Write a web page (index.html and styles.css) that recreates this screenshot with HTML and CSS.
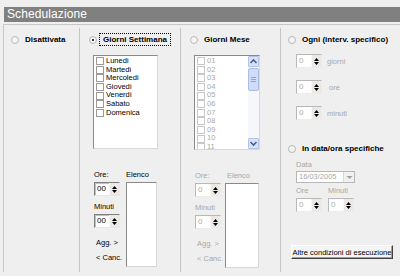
FILE: index.html
```html
<!DOCTYPE html>
<html lang="it">
<head>
  <meta charset="UTF-8" />
  <title>Schedulazione</title>
  <link rel="stylesheet" href="styles.css">
</head>
<body>
  <div class="title">Schedulazione</div>

  <div class="frame">
    <!-- Disattivata -->
    <div class="col col-off">
      <label class="opt"><span class="radio"></span><b>Disattivata</b></label>
    </div>

    <!-- Giorni settimana -->
    <div class="col col-week">
      <label class="opt"><span class="radio on"></span><b class="focus">Giorni Settimana</b></label>
      <div class="list">
        <div class="item"><span class="chk"></span>Lunedì</div>
        <div class="item"><span class="chk"></span>Martedì</div>
        <div class="item"><span class="chk"></span>Mercoledì</div>
        <div class="item"><span class="chk"></span>Giovedì</div>
        <div class="item"><span class="chk"></span>Venerdì</div>
        <div class="item"><span class="chk"></span>Sabato</div>
        <div class="item"><span class="chk"></span>Domenica</div>
      </div>
      <div class="times">
        <div class="fields">
          <div class="lbl">Ore:</div>
          <div class="spin"><span class="val">00</span><span class="arr"><svg width="9" height="11" viewBox="0 0 9 11"><path d="M2 5h5L4.5 2z M2 6h5L4.5 9z" fill="#000"/></svg></span></div>
          <div class="lbl gap">Minuti</div>
          <div class="spin"><span class="val">00</span><span class="arr"><svg width="9" height="11" viewBox="0 0 9 11"><path d="M2 5h5L4.5 2z M2 6h5L4.5 9z" fill="#000"/></svg></span></div>
          <div class="act first">Agg. &gt;</div>
          <div class="act">&lt; Canc.</div>
        </div>
        <div class="elenco">
          <div class="lbl">Elenco</div>
          <div class="box"></div>
        </div>
      </div>
    </div>

    <!-- Giorni mese -->
    <div class="col col-month">
      <label class="opt"><span class="radio"></span><b>Giorni Mese</b></label>
      <div class="list off scroll">
        <div class="items">
          <div class="item"><span class="chk"></span>01</div>
          <div class="item"><span class="chk"></span>02</div>
          <div class="item"><span class="chk"></span>03</div>
          <div class="item"><span class="chk"></span>04</div>
          <div class="item"><span class="chk"></span>05</div>
          <div class="item"><span class="chk"></span>06</div>
          <div class="item"><span class="chk"></span>07</div>
          <div class="item"><span class="chk"></span>08</div>
          <div class="item"><span class="chk"></span>09</div>
          <div class="item"><span class="chk"></span>10</div>
          <div class="item"><span class="chk"></span>11</div>
        </div>
        <div class="sbar">
          <span class="sbtn"><svg width="9" height="9" viewBox="0 0 9 9"><path d="M1.5 6L4.5 3L7.5 6" stroke="#4d6185" stroke-width="1.6" fill="none"/></svg></span>
          <span class="thumb"><i></i><i></i><i></i></span>
          <span class="track"></span>
          <span class="sbtn"><svg width="9" height="9" viewBox="0 0 9 9"><path d="M1.5 3L4.5 6L7.5 3" stroke="#4d6185" stroke-width="1.6" fill="none"/></svg></span>
        </div>
      </div>
      <div class="times off">
        <div class="fields">
          <div class="lbl">Ore:</div>
          <div class="spin"><span class="val">0</span><span class="arr"><svg width="9" height="11" viewBox="0 0 9 11"><path d="M2 5h5L4.5 2z M2 6h5L4.5 9z" fill="#000"/></svg></span></div>
          <div class="lbl gap">Minuti</div>
          <div class="spin"><span class="val">0</span><span class="arr"><svg width="9" height="11" viewBox="0 0 9 11"><path d="M2 5h5L4.5 2z M2 6h5L4.5 9z" fill="#000"/></svg></span></div>
          <div class="act first">Agg. &gt;</div>
          <div class="act">&lt; Canc.</div>
        </div>
        <div class="elenco">
          <div class="lbl">Elenco</div>
          <div class="box"></div>
        </div>
      </div>
    </div>

    <!-- Intervallo / data specifica -->
    <div class="col col-every">
      <label class="opt"><span class="radio"></span><b>Ogni (interv. specifico)</b></label>
      <div class="every off">
        <div class="row"><div class="spin"><span class="val">0</span><span class="arr"><svg width="9" height="11" viewBox="0 0 9 11"><path d="M2 5h5L4.5 2z M2 6h5L4.5 9z" fill="#000"/></svg></span></div><span class="unit">giorni</span></div>
        <div class="row"><div class="spin"><span class="val">0</span><span class="arr"><svg width="9" height="11" viewBox="0 0 9 11"><path d="M2 5h5L4.5 2z M2 6h5L4.5 9z" fill="#000"/></svg></span></div><span class="unit u-ore">ore</span></div>
        <div class="row"><div class="spin"><span class="val">0</span><span class="arr"><svg width="9" height="11" viewBox="0 0 9 11"><path d="M2 5h5L4.5 2z M2 6h5L4.5 9z" fill="#000"/></svg></span></div><span class="unit">minuti</span></div>
      </div>

      <label class="opt opt-date"><span class="radio"></span><b>In data/ora specifiche</b></label>
      <div class="date off">
        <div class="lbl">Data</div>
        <div class="combo"><span class="val">16/03/2005</span><span class="drop"><svg width="7" height="5" viewBox="0 0 7 5"><path d="M0.5 1h6L3.5 4z" fill="#a0a0a0"/></svg></span></div>
        <div class="pair">
          <div>
            <div class="lbl">Ore</div>
            <div class="spin"><span class="val">0</span><span class="arr"><svg width="9" height="11" viewBox="0 0 9 11"><path d="M2 5h5L4.5 2z M2 6h5L4.5 9z" fill="#000"/></svg></span></div>
          </div>
          <div>
            <div class="lbl">Minuti</div>
            <div class="spin"><span class="val">0</span><span class="arr"><svg width="9" height="11" viewBox="0 0 9 11"><path d="M2 5h5L4.5 2z M2 6h5L4.5 9z" fill="#000"/></svg></span></div>
          </div>
        </div>
      </div>

      <button type="button" class="btn">Altre condizioni di esecuzione</button>
    </div>
  </div>
</body>
</html>
```

FILE: styles.css
```css
* {
  box-sizing: border-box;
}

body {
  margin: 0;
  background: #efefef;
  font-family: "Liberation Sans", Arial, sans-serif;
  font-size: 7.5px;
  color: #000;
  white-space: nowrap;
}

.title {
  margin: 7px 0 0 4px;
  height: 15px;
  line-height: 15px;
  padding-left: 3px;
  background: #808080;
  color: #fff;
  font-size: 12px;
  letter-spacing: 0.1px;
}

.frame {
  margin: 2px 0 0 3px;
  border-top: 1px solid #c8c8c8;
  border-left: 1px solid #c8c8c8;
  padding-top: 3px;
  display: flex;
  height: 248px;
}

.col {
  padding-top: 5px;
}

.col + .col {
  border-left: 1px solid #c4c4c4;
}

.col-off { width: 75px; padding-left: 7px; }
.col-week { width: 101px; padding-left: 9px; }
.col-month { width: 100px; padding-left: 9px; }
.col-every { flex: 1; padding-left: 7px; }

/* radio options */
.opt {
  display: flex;
  align-items: center;
  height: 13px;
  gap: 4px;
}

.opt b {
  font-size: 8px;
  padding: 0 2px;
}

.opt b.focus {
  outline: 1px dotted #000;
  outline-offset: 1px;
}

.radio {
  width: 8px;
  height: 8px;
  border-radius: 50%;
  background: #f4f4f4;
  border: 1px solid #b8b8b8;
  position: relative;
  flex: none;
}

.radio.on::after {
  content: "";
  position: absolute;
  left: 2px;
  top: 2px;
  width: 2px;
  height: 2px;
  border-radius: 50%;
  background: #000;
}

/* list boxes */
.list {
  margin: 9px 0 0 4px;
  width: 65px;
  height: 94px;
  background: #fff;
  border: 1px solid;
  border-color: #8a8a8a #d8d8d8 #d8d8d8 #8a8a8a;
  padding: 1px 0 0 2px;
  overflow: hidden;
}

.item {
  display: flex;
  align-items: center;
  height: 8.6px;
  line-height: 8.6px;
  gap: 2px;
}

.chk {
  width: 8px;
  height: 8px;
  border: 1px solid #9a9a9a;
  background: #fff;
  flex: none;
}

.list.off {
  color: #a8a8a8;
}

.list.off .chk {
  border-color: #c8c8c8;
}

.list.scroll {
  display: flex;
  width: 66px;
  height: 95px;
  padding: 0;
}

.list.scroll .items {
  flex: 1;
  padding: 1px 0 0 2px;
}

.sbar {
  width: 11px;
  display: flex;
  flex-direction: column;
  background: #f6f7fb;
}

.sbtn {
  height: 11px;
  display: flex;
  align-items: center;
  justify-content: center;
  background: #d6e2fb;
  border: 1px solid #b4c4e6;
  border-radius: 1px;
}

.thumb {
  margin-top: 1px;
  height: 23px;
  background: #cfdcf8;
  border: 1px solid #a9bde6;
  border-radius: 2px;
  display: flex;
  flex-direction: column;
  align-items: center;
  justify-content: center;
  gap: 1px;
}

.thumb i {
  width: 5px;
  height: 1px;
  background: #8fa6d6;
}

.track {
  flex: 1;
}

/* time entry blocks */
.times {
  display: flex;
  margin: 21px 0 0 5px;
}

.fields {
  width: 32px;
}

.lbl {
  height: 10px;
  line-height: 10px;
}

.lbl.gap {
  margin-top: 6px;
}

.fields .spin {
  margin-top: 2px;
}

.act {
  padding-left: 2px;
  height: 10px;
  line-height: 10px;
  margin-top: 5px;
}

.act.first {
  margin-top: 10px;
}

.elenco .box {
  margin-top: 2px;
  width: 31px;
  height: 85px;
  background: #fff;
  border: 1px solid;
  border-color: #8a8a8a #d8d8d8 #d8d8d8 #8a8a8a;
}

.col-month .times {
  margin-left: 5px;
}

.col-month .elenco .box {
  width: 34px;
  margin-left: -2px;
}

.off {
  color: #a8a8a8;
}

/* spin boxes */
.spin {
  display: flex;
  width: 26px;
  height: 14px;
  background: #fff;
  border: 1px solid;
  border-color: #808080 #e8e8e8 #e8e8e8 #808080;
  box-shadow: inset 1px 1px 0 #c0c0c0;
}

.spin .val {
  flex: 1;
  padding-left: 2px;
  line-height: 12px;
  font-size: 8px;
}

.spin .arr {
  width: 10px;
  display: flex;
  align-items: center;
  justify-content: center;
  background: #ece9e4;
  border-left: 1px solid #f8f8f8;
}

.off .spin {
  border-color: #b8b8b8 #ececec #ececec #b8b8b8;
  box-shadow: none;
}

/* intervallo */
.every {
  margin: 8px 0 0 8px;
}

.every .row {
  display: flex;
  align-items: center;
  gap: 5px;
  height: 14px;
  margin-bottom: 12px;
}

.every .row:last-child {
  margin-bottom: 0;
}

.every .unit {
  color: #a8a8a8;
}

.every .u-ore {
  padding-left: 2px;
}

.opt-date {
  margin-top: 22px;
}

.date {
  margin: 5px 0 0 8px;
}

.combo {
  display: flex;
  margin-top: 1px;
  width: 59px;
  height: 12px;
  background: #fff;
  border: 1px solid #b8b8b8;
}

.combo .val {
  flex: 1;
  padding-left: 2px;
  line-height: 10px;
}

.combo .drop {
  width: 11px;
  display: flex;
  align-items: center;
  justify-content: center;
  background: #f0f0f0;
  border-left: 1px solid #d8d8d8;
}

.pair {
  display: flex;
  gap: 6px;
  margin-top: 3px;
}

.pair .spin {
  margin-top: 2px;
}

.btn {
  margin: 33px 0 0 3px;
  width: 102px;
  height: 14px;
  padding: 0;
  font-family: inherit;
  font-size: 7.5px;
  color: #000;
  background: #f4f4f4;
  border: 1px solid;
  border-color: #fff #404040 #404040 #fff;
  box-shadow: inset -1px -1px 0 #a0a0a0;
}
```
